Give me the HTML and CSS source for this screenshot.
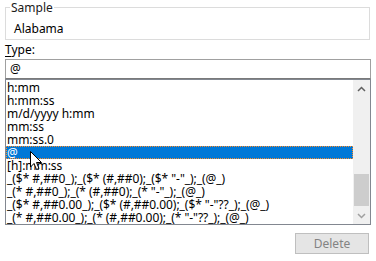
FILE: index.html
```html
<!DOCTYPE html>
<html lang="en">
<head>
  <meta charset="UTF-8" />
  <title>Format Cells - Custom</title>
  <link rel="stylesheet" href="styles.css">
</head>
<body>
  <fieldset class="sample">
    <legend>Sample</legend>
    <div class="sample-value">Alabama</div>
  </fieldset>

  <label class="type-label" for="typeInput"><u>T</u>ype:</label>
  <div class="type-input" id="typeInput">@</div>

  <div class="format-list">
    <div class="rows">
      <div class="row">h:mm</div>
      <div class="row">h:mm:ss</div>
      <div class="row">m/d/yyyy h:mm</div>
      <div class="row">mm:ss</div>
      <div class="row">mm:ss.0</div>
      <div class="row selected">@</div>
      <div class="row">[h]:mm:ss</div>
      <div class="row">_($* #,##0_);_($* (#,##0);_($* "-"_);_(@_)</div>
      <div class="row">_(* #,##0_);_(* (#,##0);_(* "-"_);_(@_)</div>
      <div class="row">_($* #,##0.00_);_($* (#,##0.00);_($* "-"??_);_(@_)</div>
      <div class="row">_(* #,##0.00_);_(* (#,##0.00);_(* "-"??_);_(@_)</div>
    </div>
    <div class="scrollbar">
      <div class="arrow">
        <svg width="9" height="6" viewBox="0 0 9 6"><path d="M1 5 L4.5 1.5 L8 5" fill="none" stroke="#606060" stroke-width="1.5"/></svg>
      </div>
      <div class="track">
        <div class="thumb"></div>
      </div>
      <div class="arrow">
        <svg width="9" height="6" viewBox="0 0 9 6"><path d="M1 1 L4.5 4.5 L8 1" fill="none" stroke="#a0a0a0" stroke-width="1.5"/></svg>
      </div>
    </div>

    <!-- mouse pointer over the selected row -->
    <svg class="pointer" width="13" height="20" viewBox="0 0 13 20">
      <path d="M0.5 0.5 L0.5 16 L4 12.5 L6.5 18.5 L9 17.5 L6.5 11.5 L11.5 11.5 Z" fill="#fff" stroke="#000" stroke-width="1"/>
    </svg>
  </div>

  <div class="actions">
    <button class="delete" disabled>Delete</button>
  </div>
</body>
</html>
```

FILE: styles.css
```css
body {
  margin: 0;
  font-family: "Noto Sans", "Open Sans", sans-serif;
  font-size: 12px;
  color: #000;
  background-color: #fff;
}

.sample {
  box-sizing: border-box;
  width: 365px;
  margin: 0 0 0 5px;
  padding: 6px 4px 2px 4px;
  border: 1px solid #dcdcdc;
  min-inline-size: 0;
}

.sample legend {
  padding: 0 1px;
  line-height: 15px;
  color: #1a1a1a;
}

.sample-value {
  margin-left: 4px;
  line-height: 16px;
}

.type-label {
  display: block;
  margin: 2px 0 0 5px;
  line-height: 16px;
}

.type-label u {
  text-underline-offset: 2px;
}

.type-input {
  box-sizing: border-box;
  width: 366px;
  height: 20px;
  margin: 1px 0 0 5px;
  padding: 0 4px;
  border: 1px solid #a0a0a0;
  border-bottom-color: #7a7a7a;
  line-height: 18px;
}

.format-list {
  position: relative;
  box-sizing: border-box;
  display: flex;
  width: 366px;
  height: 146px;
  margin-left: 5px;
  border: 1px solid #828790;
  overflow: hidden;
}

.rows {
  flex: 1;
  padding-top: 1px;
}

.row {
  height: 13px;
  line-height: 13px;
  padding-left: 1px;
  white-space: nowrap;
  letter-spacing: -0.05px;
}

.row.selected {
  box-sizing: border-box;
  background-color: #0078d7;
  color: #fff;
  outline: 1px dotted #ff8c28;
  outline-offset: -1px;
}

.scrollbar {
  width: 17px;
  display: flex;
  flex-direction: column;
  background-color: #f0f0f0;
}

.arrow {
  height: 17px;
  display: flex;
  align-items: center;
  justify-content: center;
}

.track {
  flex: 1;
  padding-top: 77px;
}

.thumb {
  height: 32px;
  margin: 0 1px;
  background-color: #cdcdcd;
}

.pointer {
  position: absolute;
  left: 24px;
  top: 71px;
}

.actions {
  display: flex;
  justify-content: flex-end;
  padding: 8px 7px 0 0;
}

.delete {
  width: 74px;
  height: 21px;
  font-family: inherit;
  font-size: 12px;
  color: #838383;
  background-color: #e5e5e5;
  border: 1px solid #bfbfbf;
  border-radius: 0;
  padding: 0;
}
```
